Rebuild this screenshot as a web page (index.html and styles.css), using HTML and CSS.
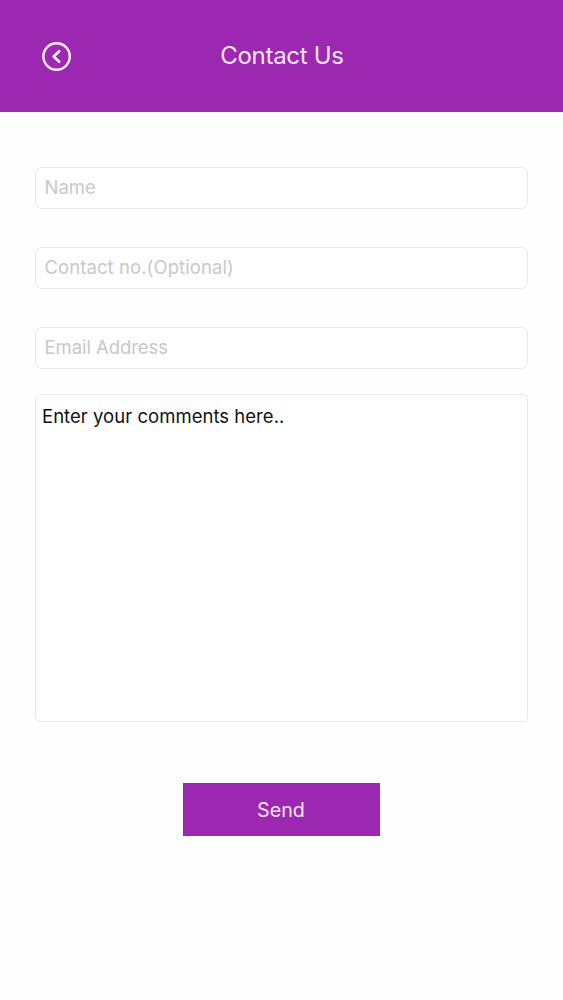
FILE: index.html
```html
<!DOCTYPE html>
<html lang="en">
<head>
<meta charset="utf-8">
<title>Contact Us</title>
<link rel="stylesheet" href="styles.css">
</head>
<body>
<header class="header">
  <button class="back" aria-label="Back">
    <svg width="30" height="30" viewBox="0 0 30 30" fill="none" stroke="currentColor">
      <circle cx="15.600" cy="15.500" r="13.200" stroke-width="2.400"/>
      <path d="M18.200 10.200 12.700 15.500l5.500 5.300" stroke-width="2.600" stroke-linecap="round" stroke-linejoin="round"/>
    </svg>
  </button>
  <h1 class="title">Contact Us</h1>
</header>
<main class="form">
  <div class="field"><span class="field-text">Name</span></div>
  <div class="field"><span class="field-text phone">Contact no.(Optional)</span></div>
  <div class="field"><span class="field-text email">Email Address</span></div>
  <div class="comments"><span class="comments-text">Enter your comments here..</span></div>
  <button class="send">Send</button>
</main>
</body>
</html>
```
FILE: styles.css
```css
* { box-sizing: border-box; }
body { margin: 0; height: 1000px; background: #fefefe; font-family: Inter, "Liberation Sans", sans-serif; }
.header { height: 112px; padding: 0 41px; background: #9c27b0; color: #fbe6fd; display: grid; grid-template-columns: 30px 1fr 30px; align-items: center; }
.back { width: 30px; height: 30px; padding: 0; border: 0; background: none; color: #fdeffe; }
.back svg { display: block; overflow: visible; }
.title { margin: 0; padding-left: 1px; text-align: center; font-size: 24px; letter-spacing: -0.3px; line-height: 30px; font-weight: 400; }
.form { display: flex; flex-direction: column; padding: 55px 35px 0; }
.field { height: 42px; margin-bottom: 38px; padding: 0 8.500px; border: 1px solid #ebe8ec; border-radius: 7px; background: #fff; color: #cac7cb; font-size: 18.500px; line-height: 38px; }
.field:nth-child(3) { margin-bottom: 25px; }
.phone { letter-spacing: 0.080px; }
.email { letter-spacing: -0.060px; }
.comments { height: 328px; padding: 9px 6px; border: 1px solid #e8e6e9; border-radius: 5px; background: #fff; color: #111; font-size: 18.500px; letter-spacing: 0.030px; line-height: 24px; }
.send { align-self: center; width: 197px; height: 53px; margin: 61px 1px 0 0; padding: 0; border: 0; background: #9c27b0; color: #fbe6fd; font: 400 19.700px/55px Inter, "Liberation Sans", sans-serif; }
```
